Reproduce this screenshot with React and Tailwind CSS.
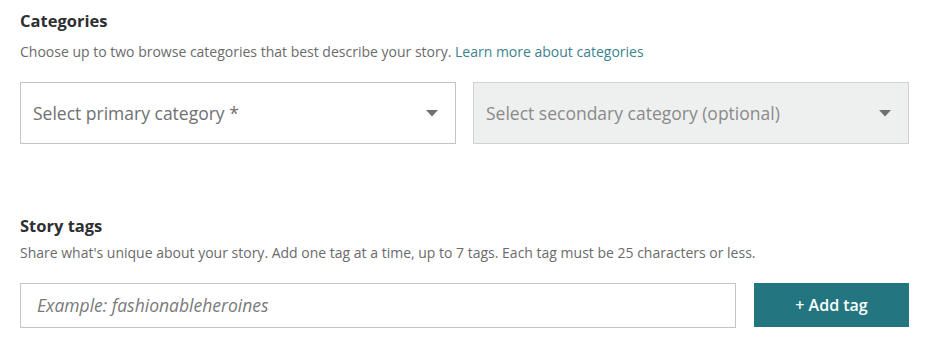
import React from "react";

function Caret() {
  return (
    <svg width="12" height="7" viewBox="0 0 12 7" className="shrink-0">
      <path d="M0 0 L12 0 L6 6.5 Z" fill="#6f6f6f" />
    </svg>
  );
}

export default function App() {
  return (
    <div
      className="w-[936px] h-[358px] bg-white px-5 pt-[11px]"
      style={{ fontFamily: '"Open Sans", "Noto Sans", sans-serif' }}
    >
      <h2 className="text-[16.5px] leading-[20px] font-bold text-[#2d2f33]">Categories</h2>
      <p className="mt-[12px] text-[14px] leading-[18px] text-[#6b6b6b]">
        Choose up to two browse categories that best describe your story.{" "}
        <a className="text-[#3d8290]">Learn more about categories</a>
      </p>
      <div className="mt-[21px] flex gap-[17px]">
        <div className="w-[436px] h-[62px] border border-[#c4c4c4] bg-white flex items-center justify-between pl-[12px] pr-[17px]">
          <span className="text-[17.5px] text-[#707070]">Select primary category *</span>
          <Caret />
        </div>
        <div className="w-[436px] h-[62px] border border-[#d2d2d2] bg-[#eeefef] flex items-center justify-between pl-[12px] pr-[17px]">
          <span className="text-[17.5px] text-[#8a8a8a]">Select secondary category (optional)</span>
          <Caret />
        </div>
      </div>
      <h2 className="mt-[72px] text-[16.5px] leading-[20px] font-bold text-[#2d2f33]">Story tags</h2>
      <p className="mt-[8px] text-[14px] leading-[18px] text-[#6b6b6b]">
        Share what's unique about your story. Add one tag at a time, up to 7 tags. Each tag must be 25 characters or less.
      </p>
      <div className="mt-[21px] flex gap-[18px] items-start">
        <div className="w-[716px] h-[45px] border border-[#c4c4c4] flex items-center pl-[16px]">
          <span className="text-[17.5px] italic text-[#7a7a7a]">Example: fashionableheroines</span>
        </div>
        <button className="w-[155px] h-[44px] bg-[#23767f] text-white text-[16px] font-semibold flex items-center justify-center">
          + Add tag
        </button>
      </div>
    </div>
  );
}
